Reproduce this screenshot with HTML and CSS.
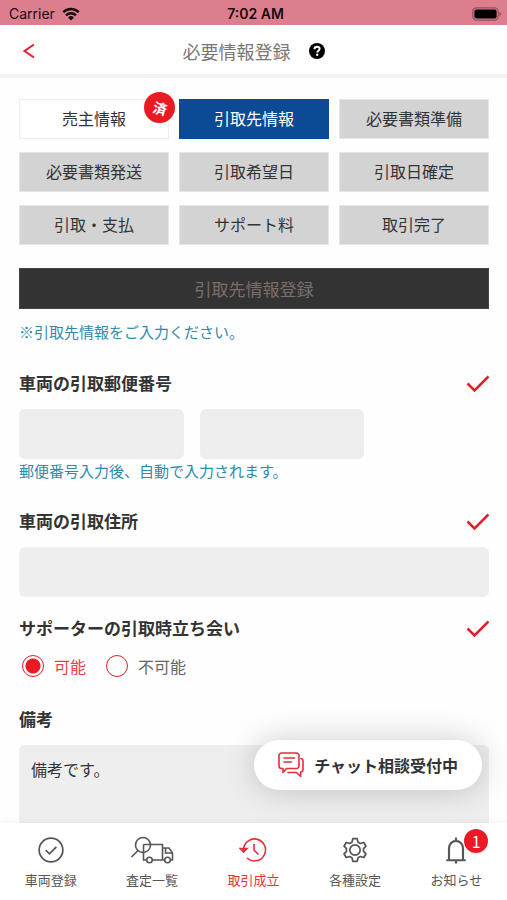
FILE: index.html
```html
<!DOCTYPE html>
<html lang="ja">
<head>
<meta charset="utf-8">
<meta name="viewport" content="width=device-width, initial-scale=1">
<title>必要情報登録</title>
<link rel="stylesheet" href="styles.css">
</head>
<body>
<div class="status">
  <div class="status-left">
    <span>Carrier</span>
    <svg class="wifi" viewBox="0 0 18 14" aria-hidden="true">
      <path d="M1.2 5.2a11.2 11.2 0 0 1 15.6 0M4 8.3a7.2 7.2 0 0 1 10 0" fill="none" stroke="#170b0e" stroke-width="2.4"/>
      <path d="M9 13.6 6 10.5a4.3 4.3 0 0 1 6 0z" fill="#170b0e"/>
    </svg>
  </div>
  <span class="clock">7:02 AM</span>
  <svg class="battery" viewBox="0 0 30 14" aria-hidden="true">
    <rect x=".8" y=".8" width="25.4" height="12.4" rx="3.6" fill="none" stroke="#8f5261" stroke-width="1.2"/>
    <rect x="2.4" y="2.4" width="22.2" height="9.2" rx="2" fill="#000"/>
    <path d="M27.4 4.8c2.2.8 2.2 3.6 0 4.4z" fill="#8f5261"/>
  </svg>
</div>

<header class="topbar">
  <button class="back" type="button" aria-label="戻る">
    <svg viewBox="0 0 12 16" aria-hidden="true"><path d="M11 1.5 1.5 8 11 14.5" fill="none" stroke="#e8202a" stroke-width="2"/></svg>
  </button>
  <div class="title">
    <h1>必要情報登録</h1>
    <button class="help" type="button" aria-label="ヘルプ">
      <svg viewBox="0 0 16 16" aria-hidden="true">
        <circle cx="8" cy="8" r="8" fill="#000"/>
        <path d="M5.4 6.2C5.500 4.600 6.600 3.700 8.100 3.700c1.500 0 2.500.9 2.500 2.100 0 1.800-2.300 1.900-2.300 3.700" fill="none" stroke="#fff" stroke-width="2"/>
        <circle cx="8.200" cy="11.800" r="1.200" fill="#fff"/>
      </svg>
    </button>
  </div>
</header>

<main>
  <nav class="steps">
    <button type="button" class="step done">売主情報<span class="stamp"><span>済</span></span></button>
    <button type="button" class="step current">引取先情報</button>
    <button type="button" class="step">必要書類準備</button>
    <button type="button" class="step">必要書類発送</button>
    <button type="button" class="step">引取希望日</button>
    <button type="button" class="step">引取日確定</button>
    <button type="button" class="step">引取・支払</button>
    <button type="button" class="step">サポート料</button>
    <button type="button" class="step">取引完了</button>
  </nav>

  <h2 class="banner">引取先情報登録</h2>
  <p class="note">※引取先情報をご入力ください。</p>

  <form>
    <section class="field">
      <div class="field-head">
        <label for="zip1">車両の引取郵便番号</label>
        <svg class="check" viewBox="0 0 24 20" aria-hidden="true"><path d="M2.500 10.500 9.500 17.500 23.500 3.500" fill="none" stroke="#e01f28" stroke-width="2.500"/></svg>
      </div>
      <div class="zip">
        <input id="zip1" type="text" inputmode="numeric">
        <input type="text" inputmode="numeric" aria-label="郵便番号 下4桁">
      </div>
      <p class="hint">郵便番号入力後、自動で入力されます。</p>
    </section>

    <section class="field">
      <div class="field-head">
        <label for="address">車両の引取住所</label>
        <svg class="check" viewBox="0 0 24 20" aria-hidden="true"><path d="M2.500 10.500 9.500 17.500 23.500 3.500" fill="none" stroke="#e01f28" stroke-width="2.500"/></svg>
      </div>
      <input id="address" type="text">
    </section>

    <section class="field" role="radiogroup" aria-labelledby="attend">
      <div class="field-head">
        <span class="legend" id="attend">サポーターの引取時立ち会い</span>
        <svg class="check" viewBox="0 0 24 20" aria-hidden="true"><path d="M2.500 10.500 9.500 17.500 23.500 3.500" fill="none" stroke="#e01f28" stroke-width="2.500"/></svg>
      </div>
      <div class="radios">
        <input type="radio" id="yes" name="attend" checked><label for="yes">可能</label>
        <input type="radio" id="no" name="attend"><label for="no">不可能</label>
      </div>
    </section>

    <section class="field">
      <div class="field-head"><label for="memo">備考</label></div>
      <textarea id="memo" rows="5">備考です。</textarea>
    </section>
  </form>
</main>

<div class="dock">
  <button class="chat" type="button">
    <svg viewBox="0 0 26 26" aria-hidden="true" fill="none" stroke="#e0303a" stroke-width="1.600" stroke-linejoin="round" stroke-linecap="round">
      <path d="M3.500 1h15a2.500 2.500 0 0 1 2.500 2.500v10.500a2.500 2.500 0 0 1-2.500 2.500H8.500L5 20.500V16.500H3.500A2.500 2.500 0 0 1 1 14V3.500A2.500 2.500 0 0 1 3.500 1z"/>
      <path d="M6 6h10.500M6 10h7.500M23 6.500c1.500.2 2 1 2 2.500v8.500c0 1.500-.8 2.300-2.300 2.500v4.500L18.500 20.500H10"/>
    </svg>
    チャット相談受付中
  </button>
  <nav class="tabs">
    <a href="#register">
      <svg viewBox="0 0 26 26" aria-hidden="true"><circle cx="13" cy="13" r="11"/><path d="m8 13 3.500 3.500 6.500-6.500"/></svg>
      車両登録
    </a>
    <a href="#assess">
      <svg class="wide" viewBox="0 0 44 28" aria-hidden="true"><circle cx="13" cy="9" r="7.500"/><path d="M8 14.500 1.500 21M13.500 8.500h19v15.500H22.500M16.500 24h-3V8.500M32.500 12h6.500l3.500 5v7h-2M34.500 24H22.500M35.500 12v5h7"/><circle cx="19.500" cy="24" r="2.800"/><circle cx="37.500" cy="24" r="2.800"/></svg>
      査定一覧
    </a>
    <a href="#deals" class="active">
      <svg viewBox="0 0 28 28" aria-hidden="true"><path d="M4.500 13.500A11 11 0 1 1 8 22M15 8v6l4.500 4.500"/><path d="M1.200 12.500 4.500 16l3.500-3.500z" fill="currentColor"/></svg>
      取引成立
    </a>
    <a href="#settings">
      <svg viewBox="0 0 26 26" aria-hidden="true"><circle cx="13" cy="13" r="4.800"/><path stroke-linejoin="round" d="M11 2.500h4l.8 3.200 2.200 1.300 3.200-1 2 3.500-2.300 2.300v2.400l2.300 2.300-2 3.500-3.200-1-2.200 1.300-.8 3.200h-4l-.8-3.200L8 19l-3.200 1-2-3.500 2.300-2.300v-2.400L2.800 9.500l2-3.500L8 7l2.200-1.300z"/></svg>
      各種設定
    </a>
    <a href="#news">
      <span class="bell">
        <svg viewBox="0 0 26 26" aria-hidden="true"><path d="M4 22.500h18M6.500 22.500V11.500a6.500 7 0 0 1 13 0v11M13 1.500v3M13 22.500v3" stroke-width="2"/></svg>
        <span class="count">1</span>
      </span>
      お知らせ
    </a>
  </nav>
</div>
</body>
</html>
```
FILE: styles.css
```css
* { box-sizing: border-box; }

body {
  margin: 0;
  height: 100vh;
  display: flex;
  flex-direction: column;
  overflow: hidden;
  background: #fefefe;
  color: #333;
  font-family: "Noto Sans CJK JP", sans-serif;
  font-size: 16px;
  line-height: 24px;
}

h1, h2, p { margin: 0; font-weight: 400; }

button, input, textarea {
  font: inherit;
  color: inherit;
  border: 0;
  padding: 0;
  background: none;
}

svg { display: block; flex: none; }

.status {
  flex: none;
  display: grid;
  grid-template-columns: 1fr auto 1fr;
  align-items: center;
  height: 25px;
  padding: 2px 5px 0 9px;
  background: #dd7e8e;
  color: #170b0e;
  font-family: Inter, "Liberation Sans", sans-serif;
  font-size: 14px;
}

.status-left { display: flex; align-items: center; gap: 7px; }
.wifi { width: 18px; height: 14px; }
.clock { font-weight: 600; }
.battery { width: 30px; height: 14px; justify-self: end; }

.topbar {
  flex: none;
  display: grid;
  grid-template-columns: 1fr auto 1fr;
  align-items: center;
  height: 53px;
  padding: 0 19px;
  border-bottom: 4px solid #f1f1f1;
  background: #fff;
}

.title { display: flex; align-items: center; gap: 18px; padding-top: 3px; }
.title h1 { font-size: 18px; color: #777; }
.back { justify-self: start; padding: 2px 4px 0; }
.back svg { width: 12px; height: 16px; }
.help svg { width: 16px; height: 16px; }

main { flex: 1; min-height: 0; overflow: hidden; padding: 21px 18px 0 19px; }

.steps {
  display: grid;
  grid-template-columns: repeat(3, 1fr);
  gap: 13px 10px;
}

.step {
  position: relative;
  height: 40px;
  padding-bottom: 2px;
  border: 1px solid #e6e6e6;
  background: #d3d3d3;
}

.step.done { border-color: #eee; background: #fff; }
.step.current { border-color: #0b4a94; background: #0b4a94; color: #fff; }

.stamp {
  position: absolute;
  top: -8px;
  right: -7px;
  display: grid;
  place-items: center;
  width: 31px;
  height: 31px;
  border-radius: 50%;
  background: #ea1a24;
  color: #fff;
  font-size: 14px;
  font-weight: 700;
}

.stamp span { transform: rotate(15deg); }

.banner {
  margin-top: 23px;
  border: 1px solid #444;
  background: #333;
  color: #7d6e6b;
  font-size: 17px;
  line-height: 39px;
  text-align: center;
}

.note, .hint { color: #2f8aaa; font-size: 15px; line-height: 24px; }
.note { margin-top: 11px; }
.hint { margin-bottom: 7px; }

form { display: flex; flex-direction: column; gap: 18px; margin-top: 26px; }

.field-head {
  display: flex;
  align-items: center;
  justify-content: space-between;
  height: 26px;
  margin-bottom: 13px;
  font-size: 17px;
  font-weight: 700;
}

.check { width: 24px; height: 20px; }

.zip { display: flex; gap: 16px; }
.zip input { width: 35%; }

input[type="text"] {
  width: 100%;
  height: 50px;
  padding: 0 12px;
  border-radius: 6px;
  background: #eee;
  display: block;
}

.zip input[type="text"] { width: 35%; }

.radios {
  display: flex;
  align-items: center;
  margin-bottom: 10px;
  padding-left: 3px;
  color: #666;
}

.radios label { margin: 0 20px 0 10px; }
input[type="radio"]:checked + label { color: #e8404a; }

input[type="radio"] {
  appearance: none;
  width: 22px;
  height: 22px;
  margin: 0;
  border: 1px solid #e01f28;
  border-radius: 50%;
  background: #fff;
}

input[type="radio"]:checked {
  background: radial-gradient(circle, #ea1a24 7px, #fff 8px);
}

textarea {
  display: block;
  width: 100%;
  padding: 12px;
  border-radius: 6px;
  background: #eee;
  resize: none;
}

.dock { position: relative; flex: none; }

.chat {
  position: absolute;
  right: 25px;
  bottom: calc(100% + 33px);
  display: flex;
  align-items: center;
  gap: 10px;
  height: 50px;
  padding: 0 24px;
  border-radius: 25px;
  background: #fff;
  box-shadow: 0 0 32px rgba(0, 0, 0, .2);
  font-weight: 700;
  white-space: nowrap;
}

.chat svg { width: 26px; height: 26px; }

.tabs {
  position: relative;
  display: grid;
  grid-template-columns: repeat(5, 1fr);
  height: 77px;
  padding-top: 13px;
  background: #fff;
  box-shadow: 0 0 8px rgba(0, 0, 0, .06);
}

.tabs a {
  display: flex;
  flex-direction: column;
  align-items: center;
  gap: 6px;
  color: #555;
  font-size: 13px;
  line-height: 20px;
  text-decoration: none;
}

.tabs a.active { color: #e8303a; }

.tabs svg {
  width: 28px;
  height: 28px;
  fill: none;
  stroke: currentColor;
  stroke-width: 1.6;
}

.tabs svg.wide { width: 44px; }

.bell { position: relative; }

.count {
  position: absolute;
  top: -7px;
  right: -18px;
  width: 24px;
  height: 24px;
  border-radius: 50%;
  background: #ea1a24;
  color: #fff;
  font-size: 16px;
  line-height: 24px;
  text-align: center;
}
```
